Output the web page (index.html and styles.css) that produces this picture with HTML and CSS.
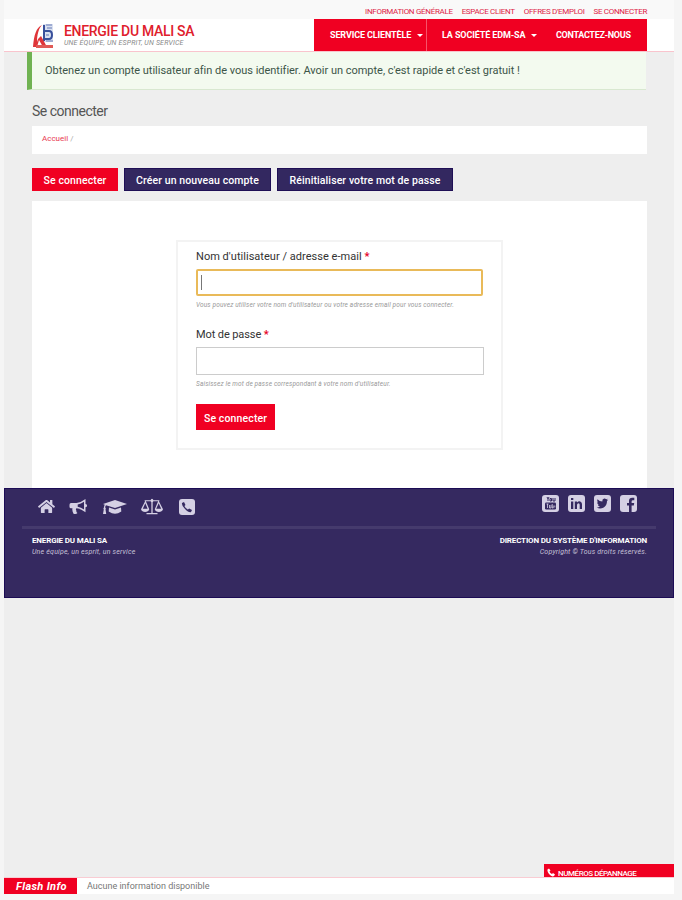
FILE: index.html
```html
<!DOCTYPE html>
<html lang="fr">
<head>
    <meta charset="UTF-8">
    <meta name="viewport" content="width=device-width, initial-scale=1.0">
    <title>Se connecter | Energie du Mali SA</title>
    <link rel="stylesheet" href="styles.css">
</head>
<body>
    <div class="page">
        <div class="topbar">
            <a>INFORMATION GÉNÉRALE</a>
            <a>ESPACE CLIENT</a>
            <a>OFFRES D'EMPLOI</a>
            <a>SE CONNECTER</a>
        </div>

        <header class="header">
            <div class="brand">
                <svg class="logo" viewBox="0 0 24 26">
                    <path d="M11 1h10v18H11z" fill="#d9e0f0"/>
                    <path d="M12 2v16M12 8h5q3 0 3 4t-3 4h-4" fill="none" stroke="#39509b" stroke-width="2"/>
                    <path d="M14 2h6M15 5h5M14 12h3M14 18h7" stroke="#6478b5"/>
                    <path d="M10 2C4 5 2 12 1 24h4l2-7 4 7h4L9 13Q6 15 5 19C5 11 7 5 10 2z" fill="#df3539"/>
                    <path d="M4 22h17v3H4z" fill="#e05a56"/>
                </svg>
                <div class="brand-text">
                    <div class="brand-name">ENERGIE DU MALI SA</div>
                    <div class="brand-slogan">UNE ÉQUIPE, UN ESPRIT, UN SERVICE</div>
                </div>
            </div>
            <nav class="nav">
                <a class="nav-item nav-service"><span>SERVICE CLIENTÈLE</span><i class="caret"></i></a>
                <a class="nav-item nav-company"><span>LA SOCIÉTÉ EDM-SA</span><i class="caret"></i></a>
                <a class="nav-item nav-contact"><span>CONTACTEZ-NOUS</span></a>
            </nav>
        </header>

        <div class="alert">Obtenez un compte utilisateur afin de vous identifier. Avoir un compte, c'est rapide et c'est gratuit !</div>

        <main class="main">
            <h1 class="title">Se connecter</h1>
            <div class="breadcrumb"><a>Accueil</a> <span>/</span></div>
            <div class="tabs">
                <a class="tab tab-login active">Se connecter</a>
                <a class="tab tab-create">Créer un nouveau compte</a>
                <a class="tab tab-reset">Réinitialiser votre mot de passe</a>
            </div>
            <div class="content">
                <form class="login-form">
                    <label class="label-user">Nom d'utilisateur / adresse e-mail <b>*</b></label>
                    <div class="input focused"><i class="cursor"></i></div>
                    <p class="help help-user">Vous pouvez utiliser votre nom d'utilisateur ou votre adresse email pour vous connecter.</p>
                    <label class="label-pass">Mot de passe <b>*</b></label>
                    <div class="input"></div>
                    <p class="help help-pass">Saisissez le mot de passe correspondant à votre nom d'utilisateur.</p>
                    <button type="button" class="submit">Se connecter</button>
                </form>
            </div>
        </main>

        <footer class="footer">
            <div class="footer-icons">
                <div class="links">
                    <svg class="icon-home" viewBox="0 0 576 512"><path d="M280 148 96 300v164c0 9 7 16 16 16h112V368c0-9 7-16 16-16h96c9 0 16 7 16 16v112h112c9 0 16-7 16-16V300L296 148c-5-4-11-4-16 0zM572 251l-84-69V44c0-7-5-12-12-12h-56c-7 0-12 5-12 12v72l-90-74c-17-14-43-14-60 0L4 251c-5 4-6 12-1 17l25 31c4 5 12 6 17 2L280 108c5-4 11-4 16 0l235 193c5 4 13 3 17-2l26-31c4-5 3-13-2-17z"/></svg>
                    <svg class="icon-horn" viewBox="0 0 18 16"><path fill-rule="evenodd" d="M16 0v5q1.600.3 1.600 1.700T16 8.300v5Q11.500 9.500 7 9.200 5.800 10.300 7 11.700 6.400 13 8 14q-1.500 1.700-4 .7Q2.300 11.500 3 9.200H1.500Q0 9.200 0 7.700v-2Q0 4 1.500 4H7q4.500-.5 9-4zM14.500 2.800Q11.500 5 8.200 5.400v2.400q3.300.4 6.300 2.700z"/></svg>
                    <svg class="icon-cap" viewBox="0 0 24 16"><path d="M12 1 24 5 12 9 3 6.200Q2.200 7 2.200 8.500 3.200 9.300 2.500 10.300L3.200 15H0l.8-4.700q-.8-1 .2-1.800 0-1.700.8-2.700L0 5zM6 8.500l6 2 6-2 .3 4Q15 14.800 12 14.800T5.700 12.500z"/></svg>
                    <svg class="icon-scale" viewBox="0 0 24 19"><path fill-rule="evenodd" d="M11 1q1-1 2 0l.5 1H20v1.300h-.5L24 12q-1 3-4.500 3T15 12l3.700-8.700h-5.200q-.3.8-.8 1V16H18v1.500H6V16h5.300V4.300q-.5-.2-.8-1H5.300L9 12q-1 3-4.500 3T0 12l4.500-8.700H4V2h6.500zM4.700 5.500 2 11.500h5.200zm14.600 0-2.700 6h5.400z"/></svg>
                    <svg class="icon-phone" viewBox="0 0 16 16"><rect width="16" height="16" rx="3"/><path class="cut" d="m3 4 2-1 1.500 3L5.400 7q1.100 2.500 3.600 3.600l1.100-1.200L13 11l-1 2Q10 14 6 10 2.500 6.500 3 4z"/></svg>
                </div>
                <div class="social">
                    <svg viewBox="0 0 17 17"><rect width="17" height="17" rx="3"/><path class="line" d="m5 2 1 2 1-2M6 4v2M8 3.500h1.500V6H8zM11 3v3h2V3"/><rect class="cut" x="3" y="7.500" width="11" height="7" rx="1.200"/><path class="lite" d="M4.500 9h2M5.500 9v4M7.500 10v3h1.500v-3M10.200 9v4h1V10.500M12.800 10.500v2"/></svg>
                    <svg viewBox="0 0 17 17"><rect width="17" height="17" rx="3"/><path class="cut" d="M3 6.500h2.300V14H3zM3 3h2.300v2H3zM6.800 6.500H9v1q2-2 4-.6 1 .8 1 2.600V14h-2.300V9.800q0-1.500-1.200-1.500T9 9.800V14H6.800z"/></svg>
                    <svg viewBox="0 0 17 17"><rect width="17" height="17" rx="3"/><path class="cut" d="M14.200 4.800 13 6q.1 4.500-3.700 6.700-3.400 1.600-6.600-.2 2 .1 3.300-1-1.700-.2-2.200-1.700h1Q3.100 9 3.100 7.300l1 .2Q2.600 6 3.500 4.200 5.600 6.500 8.300 6.600 8 4 10.200 3.600q1.200-.1 2 .7l1.500-.6-1 1.300z"/></svg>
                    <svg viewBox="0 0 17 17"><rect width="17" height="17" rx="3"/><path class="cut" d="M9 17v-6.500H7V8h2V6q0-3.200 3.300-3.200h2v2.400h-1.300q-1.400 0-1.400 1.200V8h2.600l-.4 2.500h-2.200V17z"/></svg>
                </div>
            </div>
            <div class="footer-text">
                <div>
                    <strong>ENERGIE DU MALI SA</strong>
                    <em>Une équipe, un esprit, un service</em>
                </div>
                <div class="right">
                    <strong>DIRECTION DU SYSTÈME D'INFORMATION</strong>
                    <em>Copyright © Tous droits réservés.</em>
                </div>
            </div>
        </footer>

        <div class="emergency">
            <svg viewBox="0 0 16 16"><path d="m1 2 3-2 3 4-2 2q1 3 5 5l2-2 4 3-2 3Q10 18 4 11 0 6 1 2z"/></svg>
            <span>NUMÉROS DÉPANNAGE</span>
        </div>
        <div class="flash">
            <div class="flash-label">Flash Info</div>
            <div class="flash-text">Aucune information disponible</div>
        </div>
    </div>
</body>
</html>
```
FILE: styles.css
```css
* {
    box-sizing: border-box;
}
body {
    margin: 0;
    height: 900px;
    overflow: hidden;
    background: #f5f5f5;
    color: #444;
    font-family: Roboto, "Liberation Sans", sans-serif;
    font-size: 11px;
    white-space: nowrap;
}
.page {
    display: flex;
    flex-direction: column;
    width: 670px;
    height: 894px;
    margin-left: 4px;
    background: #eee;
}
.topbar {
    display: flex;
    justify-content: flex-end;
    gap: 9px;
    height: 19px;
    padding: 7px 27px 0 0;
    background: #f9f9f9;
    color: #de2447;
    font-size: 8px;
    letter-spacing: -.32px;
    line-height: 10px;
}
.header {
    display: flex;
    justify-content: space-between;
    height: 33px;
    padding: 0 27px 0 28px;
    background: #fff;
    border-bottom: 1px solid #f9c4cd;
}
.brand {
    display: flex;
    padding-top: 4px;
}
.logo {
    width: 24px;
    height: 26px;
    margin-right: 8px;
}
.brand-name {
    color: #e0202c;
    font-size: 14px;
    font-weight: 500;
    letter-spacing: -.3px;
    line-height: 16px;
}
.brand-slogan {
    color: #888;
    font-size: 7px;
    font-style: italic;
    letter-spacing: .18px;
    line-height: 8px;
}
.nav {
    display: flex;
    width: 333px;
    height: 32px;
    background: #f00022;
    color: #fff;
    font-size: 9px;
    font-weight: 700;
    letter-spacing: -.12px;
}
.nav-item {
    display: flex;
    align-items: center;
    gap: 6px;
}
.nav-service {
    width: 113px;
    padding-left: 16px;
    border-right: 1px solid #f6536a;
}
.nav-company {
    width: 129px;
    padding-left: 15px;
}
.nav-contact {
    letter-spacing: -.3px;
}
.caret {
    border: 3px solid transparent;
    border-top-color: #fff;
    border-bottom: 0;
}
.alert {
    width: 619px;
    height: 38px;
    margin-left: 23px;
    padding-left: 13px;
    background: #f3faef;
    border-left: 5px solid #70b252;
    border-bottom: 1px solid #d8e8d0;
    color: #3c5548;
    font-size: 11px;
    letter-spacing: -.02px;
    line-height: 37px;
}
.main {
    width: 615px;
    margin-left: 28px;
}
.title {
    height: 36px;
    margin: 0;
    padding-top: 12px;
    color: #555;
    font-size: 14px;
    font-weight: 400;
    letter-spacing: -.5px;
    line-height: 18px;
}
.breadcrumb {
    height: 28px;
    padding-left: 10px;
    background: #fff;
    color: #aaa;
    font-size: 8px;
    line-height: 26px;
}
.breadcrumb a {
    color: #e83a52;
}
.tabs {
    display: flex;
    gap: 6px;
    margin: 14px 0 10px;
}
.tab {
    height: 23px;
    background: #332860;
    border: 1px solid #1f0f55;
    color: #fff;
    font-size: 10.500px;
    font-weight: 500;
    letter-spacing: .1px;
    line-height: 23px;
    text-align: center;
}
.tab.active {
    background: #f00022;
    border-color: #f00022;
}
.tab-login {
    width: 86px;
}
.tab-create {
    width: 147px;
}
.tab-reset {
    width: 176px;
}
.content {
    height: 287px;
    padding: 39px 0 0 144px;
    background: #fff;
}
.login-form {
    display: flex;
    flex-direction: column;
    align-items: flex-start;
    width: 327px;
    height: 210px;
    padding: 8px 18px 0;
    border: 2px solid #f3f3f3;
}
.login-form label {
    margin-bottom: 5px;
    color: #333;
    font-size: 11px;
    letter-spacing: .03px;
    line-height: 14px;
}
.login-form .label-pass {
    letter-spacing: -.1px;
}
.login-form b {
    color: #e5001f;
}
.input {
    width: 288px;
    height: 28px;
    padding: 5px;
    border: 1px solid #ccc;
    background: #fff;
}
.input.focused {
    width: 287px;
    height: 27px;
    border: 2px solid #e9ba59;
    border-radius: 2px;
    padding: 4px 3px;
}
.cursor {
    display: block;
    width: 1px;
    height: 15px;
    background: #777;
}
.help {
    height: 32px;
    margin: 0;
    padding-top: 4px;
    color: #999;
    font-size: 6.500px;
    font-style: italic;
    letter-spacing: .14px;
    line-height: 10px;
}
.help-pass {
    height: 29px;
}
.submit {
    width: 79px;
    height: 26px;
    padding: 2px 0 0;
    border: 0;
    background: #f00022;
    color: #fff;
    font-family: inherit;
    font-size: 10.500px;
    font-weight: 500;
    letter-spacing: .13px;
}
.footer {
    height: 110px;
    padding: 0 17px;
    background: #352960;
    border: 1px solid #1c0c55;
    color: #fff;
}
.footer-icons {
    display: flex;
    justify-content: space-between;
    height: 40px;
    padding: 6px 19px 0 16px;
    border-bottom: 3px solid #453a6d;
}
.footer-icons svg {
    display: block;
    fill: #d5d0e4;
}
.footer-icons .cut {
    fill: #352960;
}
.footer-icons .line {
    fill: none;
    stroke: #352960;
}
.footer-icons .lite {
    fill: none;
    stroke: #d5d0e4;
    stroke-width: .8;
}
.links {
    display: flex;
    align-items: center;
    height: 23px;
}
.icon-home {
    width: 17px;
    height: 15px;
    margin-right: 14px;
}
.icon-horn {
    width: 19px;
    height: 16px;
    margin-right: 15px;
}
.icon-cap {
    width: 24px;
    height: 16px;
    margin-right: 14px;
}
.icon-scale {
    width: 22px;
    height: 18px;
    margin-right: 16px;
}
.icon-phone {
    width: 16px;
    height: 16px;
}
.social {
    display: flex;
    gap: 9px;
}
.social svg {
    width: 17px;
    height: 17px;
}
.footer-text {
    display: flex;
    justify-content: space-between;
    padding: 6px 9px 0 10px;
}
.footer-text strong,
.footer-text em {
    display: block;
    line-height: 12px;
}
.footer-text strong {
    font-size: 8px;
    letter-spacing: -.16px;
}
.footer-text em {
    color: #c7c1d8;
    font-size: 7px;
    letter-spacing: .2px;
    line-height: 10px;
}
.right {
    text-align: right;
}
.emergency {
    display: flex;
    width: 130px;
    height: 13px;
    margin: auto 0 0 auto;
    padding: 4px 0 0 3px;
    overflow: hidden;
    background: #f00022;
    color: #fff;
    font-size: 8px;
    font-weight: 500;
    letter-spacing: -.45px;
    line-height: 11px;
}
.emergency svg {
    width: 8px;
    height: 9px;
    margin-right: 3px;
    fill: #fff;
}
.flash {
    display: flex;
    height: 17px;
    background: #fff;
    border-top: 1px solid #f9ccd3;
    line-height: 17px;
}
.flash-label {
    width: 73px;
    padding-left: 12px;
    background: #f00022;
    color: #fff;
    font-size: 11px;
    font-style: italic;
    font-weight: 700;
    letter-spacing: .35px;
}
.flash-text {
    padding-left: 10px;
    color: #777;
    font-size: 9px;
}
```
